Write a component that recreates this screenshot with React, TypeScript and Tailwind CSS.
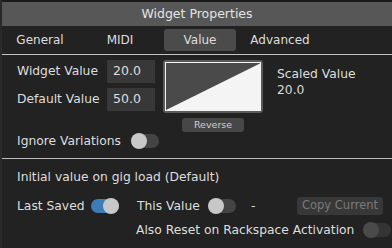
import React from "react";

function Toggle({ on = false, disabled = false }: { on?: boolean; disabled?: boolean }) {
  const track = on ? "bg-[#3d7cb8]" : disabled ? "bg-[#343434]" : "bg-[#444444]";
  const knob = disabled ? "bg-[#4a4a4a]" : "bg-[#c8c8c8]";
  return (
    <div className={`relative w-[28px] h-[14px] rounded-full shrink-0 ${track}`}>
      <div
        className={`absolute top-[-1px] ${on ? "right-0" : "left-0"} w-[16px] h-[16px] rounded-full ${knob}`}
      />
    </div>
  );
}

export default function App() {
  const font = { fontFamily: '"DejaVu Sans", Verdana, sans-serif' };
  return (
    <div
      className="w-[392px] h-[248px] bg-[#222222] text-[#dedede] text-[12.3px] overflow-hidden flex flex-col border-l-2 border-[#2a2a2a]"
      style={font}
    >
      <div className="h-[2px] bg-[#1a1a1a] shrink-0" />
      <div className="h-[24px] bg-[#575757] flex items-center justify-center shrink-0 text-[12.5px] text-[#e4e4e4]">
        Widget Properties
      </div>
      <div className="h-[28px] flex items-center gap-[8px] pl-[2px] shrink-0 text-[12px]">
        {["General", "MIDI", "Value", "Advanced"].map((t) => (
          <div
            key={t}
            className={`w-[72px] h-[22px] flex items-center justify-center rounded-[3px] ${
              t === "Value" ? "bg-[#4b4b4b]" : ""
            }`}
          >
            {t}
          </div>
        ))}
      </div>
      <div className="h-px bg-[#c4c4c4] shrink-0" />

      <div className="flex pl-[15px] pt-[5px] shrink-0">
        <div className="flex flex-col">
          <div className="flex items-center h-[23px]">
            <div className="w-[90px] whitespace-nowrap">Widget Value</div>
            <div className="w-[48px] h-[23px] bg-[#383838] flex items-center pl-[6px] text-[12.5px]">20.0</div>
          </div>
          <div className="flex items-center h-[23px] mt-[5px]">
            <div className="w-[90px] whitespace-nowrap">Default Value</div>
            <div className="w-[48px] h-[23px] bg-[#383838] flex items-center pl-[6px] text-[12.5px]">50.0</div>
          </div>
        </div>
        <div className="flex flex-col items-center ml-[8px]">
          <div className="w-[100px] h-[53px] bg-[#5a5a5a] rounded-[3px] p-[2px]">
            <svg width="96" height="49" viewBox="0 0 96 49" className="block">
              <rect x="0" y="0" width="96" height="49" fill="#f4f4f4" />
              <polygon points="1,1 95,1 95,1.5 1,48" fill="#4a4a4a" />
              <polygon points="1,1 94,1 1,47.5" fill="#4a4a4a" />
            </svg>
          </div>
          <div className="mt-[5px] w-[62px] h-[14px] bg-[#474747] rounded-[3px] flex items-center justify-center text-[9.5px] text-[#cfcfcf]">
            Reverse
          </div>
        </div>
        <div className="ml-[14px] flex flex-col pt-[6px] leading-[16px]">
          <div>Scaled Value</div>
          <div>20.0</div>
        </div>
      </div>

      <div className="flex items-center h-[16px] mt-[1px] pl-[15px] shrink-0">
        <div className="w-[114px] whitespace-nowrap">Ignore Variations</div>
        <Toggle />
      </div>

      <div className="h-px bg-[#bdbdbd] shrink-0 mt-[9px]" />

      <div className="pl-[15px] flex flex-col">
        <div className="h-[16px] mt-[10px] flex items-center whitespace-nowrap">Initial value on gig load (Default)</div>
        <div className="h-[16px] mt-[13px] flex items-center whitespace-nowrap">
          <div className="w-[74px]">Last Saved</div>
          <Toggle on />
          <div className="ml-[18px] w-[71px]">This Value</div>
          <Toggle />
          <div className="ml-[15px] w-[46px]">-</div>
          <div className="w-[86px] h-[18px] bg-[#383838] rounded-[3px] flex items-center justify-center text-[#7a7a7a] text-[11.5px] shrink-0">
            Copy Current
          </div>
        </div>
        <div className="h-[16px] mt-[8px] flex items-center pl-[119px]">
          <div className="w-[227px] whitespace-nowrap">Also Reset on Rackspace Activation</div>
          <Toggle disabled />
        </div>
      </div>
    </div>
  );
}
